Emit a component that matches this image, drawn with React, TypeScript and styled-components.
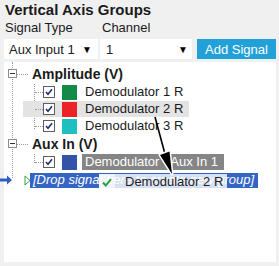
import React from "react";
import styled, { createGlobalStyle } from "styled-components";

const GlobalStyle = createGlobalStyle`
  html, body {
    margin: 0;
    padding: 0;
    background: #f0f0f0;
  }

  body {
    font-family: "Liberation Sans", Arial, sans-serif;
    color: #1a1a1a;
  }
`;

const Panel = styled.div`
  width: 279px;
  height: 266px;
  box-sizing: border-box;
  padding: 0 3px 4px 4px;
  display: flex;
  flex-direction: column;
`;

const Title = styled.h1`
  margin: 0;
  padding: 1px 0 0 1px;
  height: 18px;
  font-size: 15px;
  font-weight: 700;
  line-height: 18px;
`;

const LabelRow = styled.div`
  display: grid;
  grid-template-columns: 97px 1fr;
  padding-left: 1px;
  height: 18px;
  font-size: 13px;
  line-height: 18px;
`;

const ControlRow = styled.div`
  display: flex;
  margin-top: 2px;
  height: 20px;
`;

const Select = styled.div<{ $width: number; $left: number; $right: number }>`
  display: flex;
  align-items: center;
  justify-content: space-between;
  box-sizing: border-box;
  width: ${(p) => p.$width}px;
  padding: 0 ${(p) => p.$right}px 0 ${(p) => p.$left}px;
  margin-right: 2px;
  background: #fff;
  font-size: 13px;

  span:last-child {
    font-size: 10px;
    color: #000;
  }
`;

const AddButton = styled.button`
  width: 79px;
  margin-left: 3px;
  border: none;
  padding: 0;
  background: #22a0d8;
  color: #fff;
  font-family: inherit;
  font-size: 13px;
`;

const TreeBox = styled.div`
  position: relative;
  flex: 1;
  margin-top: 3px;
  padding-top: 3px;
  background: #fff;

  &::before {
    content: "";
    position: absolute;
    left: 8px;
    top: 0;
    height: 116px;
    border-left: 1px dotted #9a9a9a;
  }
`;

const GroupRow = styled.div`
  position: relative;
  display: flex;
  align-items: center;
  height: 18px;
  padding-left: 28px;
  font-size: 14px;
  font-weight: 700;

  &::after {
    content: "";
    position: absolute;
    left: 13px;
    top: 9px;
    width: 11px;
    border-top: 1px dotted #9a9a9a;
  }
`;

const Expander = styled.span`
  position: absolute;
  left: 4px;
  top: 4px;
  box-sizing: border-box;
  width: 9px;
  height: 9px;
  border: 1px solid #8c8c8c;
  background: #fff;

  &::after {
    content: "";
    position: absolute;
    left: 1px;
    top: 3px;
    width: 5px;
    height: 1px;
    background: #333;
  }
`;

const ChildList = styled.div<{ $count: number }>`
  position: relative;

  &::before {
    content: "";
    position: absolute;
    left: 30px;
    top: 0;
    height: ${(p) => (p.$count - 1) * 18 + 9}px;
    border-left: 1px dotted #9a9a9a;
  }
`;

const ChildRow = styled.div<{ $selected?: boolean }>`
  position: relative;
  display: flex;
  align-items: center;
  width: fit-content;
  height: 16px;
  margin: 1px 0 1px 19px;
  padding: 0 3px 0 20px;
  background: ${(p) => (p.$selected ? "#e3e3e3" : "transparent")};

  &::before {
    content: "";
    position: absolute;
    left: 12px;
    top: 8px;
    width: 8px;
    border-top: 1px dotted #9a9a9a;
  }
`;

const CheckBox = styled.span`
  display: flex;
  align-items: center;
  justify-content: center;
  box-sizing: border-box;
  width: 12px;
  height: 12px;
  border: 1px solid #5e5e5e;
  background: #fff;
`;

const Swatch = styled.span<{ $color: string }>`
  width: 15px;
  height: 15px;
  margin-left: 7px;
  background: ${(p) => p.$color};
`;

const NodeLabel = styled.span<{ $dragged?: boolean }>`
  margin-left: 5px;
  padding: 0 ${(p) => (p.$dragged ? 6 : 3)}px 0 3px;
  font-size: 13px;
  line-height: 16px;
  background: ${(p) => (p.$dragged ? "#858585" : "transparent")};
  color: ${(p) => (p.$dragged ? "#fff" : "#1a1a1a")};
`;

const DropRow = styled.div`
  position: relative;
  display: flex;
  align-items: center;
  height: 18px;
  padding-left: 20px;
`;

const DropMarker = styled.svg`
  position: absolute;
  left: -4px;
  top: 4px;
`;

const DropLabel = styled.span`
  padding: 0 4px 1px 3px;
  margin-left: -1px;
  background: #3464c4;
  color: #fff;
  font-size: 13px;
  font-style: italic;
  line-height: 14px;
`;

const Ghost = styled.div`
  position: absolute;
  left: 95px;
  top: 3px;
  display: flex;
  height: 16px;
`;

const GhostCheck = styled.span`
  display: flex;
  align-items: center;
  justify-content: center;
  width: 16px;
  background: rgba(255, 255, 255, 0.92);
`;

const GhostLabel = styled.span`
  padding: 0 4px 0 10px;
  background: rgba(255, 255, 255, 0.8);
  color: #222;
  font-size: 13px;
  line-height: 16px;
`;

const Cursor = styled.svg`
  position: absolute;
  left: 140px;
  top: 50px;
  overflow: visible;
  pointer-events: none;
`;

const Tick = () => (
  <svg width="8" height="8" viewBox="0 0 8 8">
    <path d="M1 4 L3 6.2 L7 1.2" fill="none" stroke="#1f2d6e" strokeWidth="1.6" />
  </svg>
);

type Signal = { name: string; color: string; selected?: boolean; dragged?: boolean };

const groups: { name: string; signals: Signal[] }[] = [
  {
    name: "Amplitude (V)",
    signals: [
      { name: "Demodulator 1 R", color: "#138a48" },
      { name: "Demodulator 2 R", color: "#ec2326", selected: true },
      { name: "Demodulator 3 R", color: "#1fbfbf" },
    ],
  },
  {
    name: "Aux In (V)",
    signals: [{ name: "Demodulator - Aux In 1", color: "#3453a8", dragged: true }],
  },
];

export default function App() {
  return (
    <>
      <GlobalStyle />
      <Panel>
        <Title>Vertical Axis Groups</Title>
        <LabelRow>
          <span>Signal Type</span>
          <span>Channel</span>
        </LabelRow>
        <ControlRow>
          <Select $width={94} $left={5} $right={6}>
            <span>Aux Input 1</span>
            <span>▼</span>
          </Select>
          <Select $width={92} $left={6} $right={4}>
            <span>1</span>
            <span>▼</span>
          </Select>
          <AddButton>Add Signal</AddButton>
        </ControlRow>

        <TreeBox>
          {groups.map((group) => (
            <div key={group.name}>
              <GroupRow>
                <Expander />
                {group.name}
              </GroupRow>
              <ChildList $count={group.signals.length}>
                {group.signals.map((signal) => (
                  <ChildRow key={signal.name} $selected={signal.selected}>
                    <CheckBox>
                      <Tick />
                    </CheckBox>
                    <Swatch $color={signal.color} />
                    <NodeLabel $dragged={signal.dragged}>{signal.name}</NodeLabel>
                  </ChildRow>
                ))}
              </ChildList>
            </div>
          ))}

          <DropRow>
            <DropMarker width="13" height="10" viewBox="0 0 13 10">
              <path d="M0 3.5 H7 V0.5 L12 5 L7 9.5 V6.5 H0 Z" fill="#2d5fbe" />
            </DropMarker>
            <svg width="7" height="11" viewBox="0 0 7 11">
              <path d="M1 1 L6 5.5 L1 10 Z" fill="none" stroke="#3ca03c" strokeWidth="1" />
            </svg>
            <DropLabel>[Drop signal here to create new group]</DropLabel>
            <Ghost>
              <GhostCheck>
                <svg width="10" height="9" viewBox="0 0 10 9">
                  <path d="M1 4.5 L3.8 7.5 L9 1.2" fill="none" stroke="#2ea043" strokeWidth="2" />
                </svg>
              </GhostCheck>
              <GhostLabel>Demodulator 2 R</GhostLabel>
            </Ghost>
          </DropRow>

          <Cursor width="40" height="70" viewBox="0 0 40 70">
            <line x1="11" y1="5" x2="21" y2="42" stroke="#000" strokeWidth="1.6" />
            <polygon
              points="28,62 25.5,39.5 16,43"
              fill="#000"
              stroke="#fff"
              strokeWidth="3"
              paintOrder="stroke"
              strokeLinejoin="round"
            />
          </Cursor>
        </TreeBox>
      </Panel>
    </>
  );
}
